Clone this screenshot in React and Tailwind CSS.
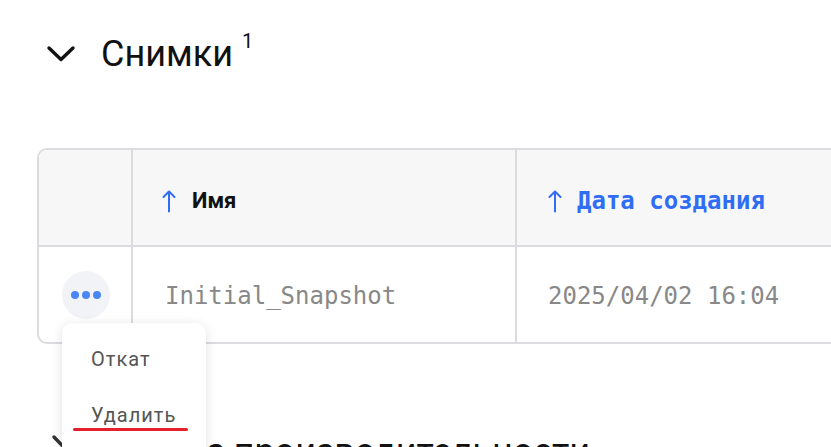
import React from "react";

function ChevronDown() {
  return (
    <svg width="30" height="20" viewBox="0 0 30 20" fill="none">
      <path d="M3 4 L15 15.5 L27 4" stroke="#111" strokeWidth="3.4" strokeLinecap="round" strokeLinejoin="round" />
    </svg>
  );
}

function ChevronRight() {
  return (
    <svg width="20" height="30" viewBox="0 0 20 30" fill="none">
      <path d="M4 3 L15.5 15 L4 27" stroke="#333" strokeWidth="3.4" strokeLinecap="round" strokeLinejoin="round" />
    </svg>
  );
}

function ArrowUp() {
  return (
    <svg width="14" height="24" viewBox="0 0 14 24" fill="none" className="shrink-0">
      <path d="M7 22.5 V2.5 M1.5 8 L7 2.5 L12.5 8" stroke="#2f6df5" strokeWidth="2" strokeLinecap="round" strokeLinejoin="round" />
    </svg>
  );
}

const mono = { fontFamily: "'DejaVu Sans Mono', 'Liberation Mono', monospace" };

export default function App() {
  return (
    <div className="relative h-[447px] w-[831px] overflow-hidden bg-white" style={{ fontFamily: "Roboto, 'Noto Sans', sans-serif" }}>
      <div className="flex items-center pl-[46px] pt-[34px]">
        <ChevronDown />
        <div className="ml-[25px] flex items-start">
          <span className="text-[36px] leading-[40px] text-[#111]">Снимки</span>
          <span className="ml-[9px] -mt-[5px] text-[20px] leading-[24px] text-[#111]">1</span>
        </div>
      </div>

      <div className="ml-[37px] mt-[74px] w-[900px] overflow-hidden rounded-[10px] border-2 border-[#dcdce0]">
        <div className="flex h-[97px] border-b-2 border-[#dcdce0] bg-[#f7f7f7]">
          <div className="w-[94px] border-r-2 border-[#dcdce0]" />
          <div className="flex w-[384px] items-center border-r-2 border-[#dcdce0] pl-[29px] pt-[6px]">
            <ArrowUp />
            <span className="ml-[16px] text-[22px] font-bold text-[#111]">Имя</span>
          </div>
          <div className="flex items-center pl-[31px] pt-[6px]" style={mono}>
            <ArrowUp />
            <span className="ml-[15px] text-[24px] font-bold text-[#2f6df5]">Дата создания</span>
          </div>
        </div>
        <div className="flex h-[95px]" style={mono}>
          <div className="flex w-[94px] items-center justify-center border-r-2 border-[#dcdce0] pl-[2px]">
            <div className="flex h-[48px] w-[48px] items-center justify-center gap-[3px] rounded-full bg-[#f2f3f6]">
              <span className="h-[8px] w-[8px] rounded-full bg-[#4a86f5]" />
              <span className="h-[8px] w-[8px] rounded-full bg-[#4a86f5]" />
              <span className="h-[8px] w-[8px] rounded-full bg-[#4a86f5]" />
            </div>
          </div>
          <div className="flex w-[384px] items-center border-r-2 border-[#dcdce0] pl-[32px] pt-[3px]">
            <span className="text-[24px] text-[#888]">Initial_Snapshot</span>
          </div>
          <div className="flex items-center pl-[31px] pt-[3px]">
            <span className="text-[24px] text-[#888]">2025/04/02 16:04</span>
          </div>
        </div>
      </div>

      <div className="mt-[90px] flex items-start pl-[50px]">
        <ChevronRight />
        <span className="ml-[31px] -mt-[2px] whitespace-nowrap text-[36px] leading-[40px] text-[#111]">Анализ производительности</span>
      </div>

      <div className="absolute left-[62px] top-[323px] h-[140px] w-[144px] rounded-[10px] bg-white shadow-[0_2px_12px_rgba(0,0,0,0.12)]">
        <div className="pl-[29px] pt-[24px] text-[20px] leading-[24px] tracking-[1px] text-[#555]">Откат</div>
        <div className="relative pl-[29px] pt-[32px] text-[20px] leading-[24px] tracking-[1px] text-[#555]">
          Удалить
          <span className="absolute left-[11px] top-[57px] h-[3px] w-[115px] rounded-full bg-[#e3202b]" />
        </div>
      </div>
    </div>
  );
}
